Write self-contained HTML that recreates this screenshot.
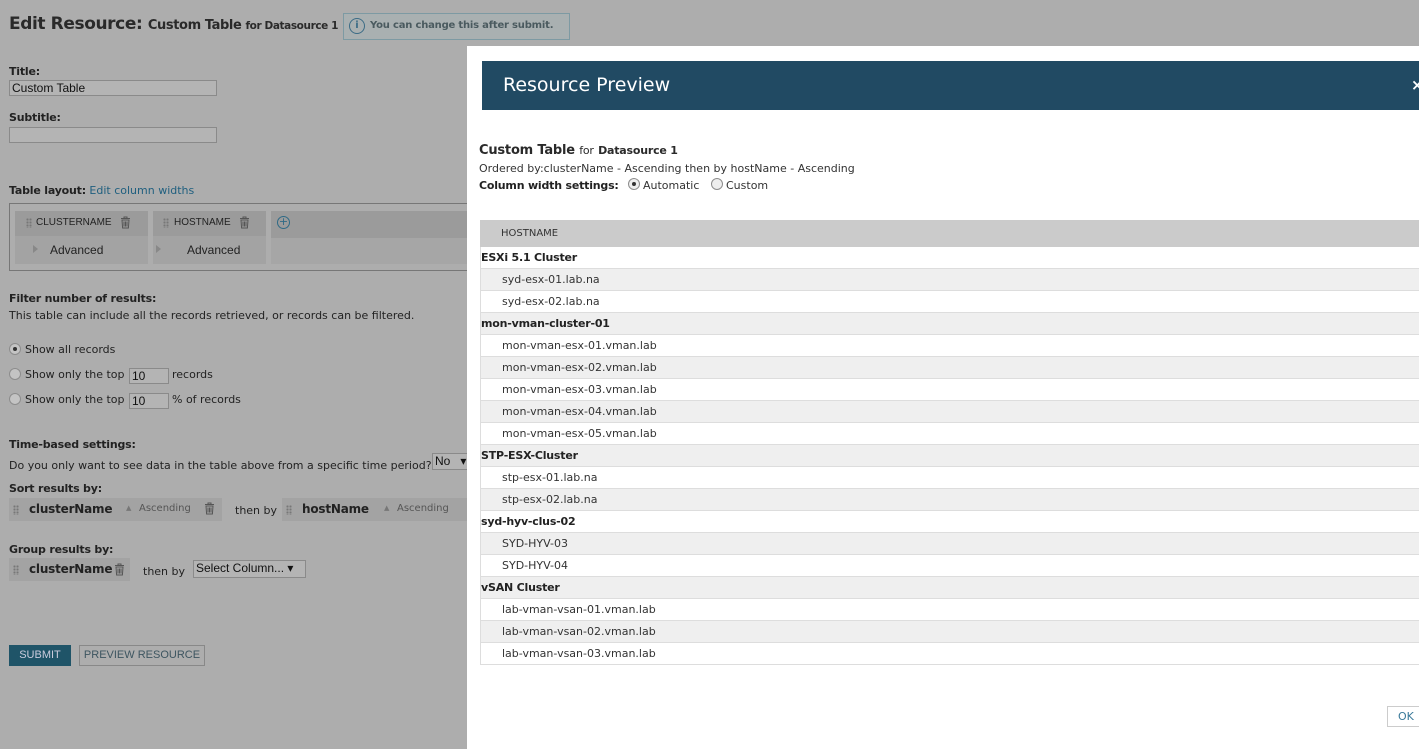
<!DOCTYPE html>
<html><head><meta charset="utf-8"><style>
*{margin:0;padding:0;box-sizing:border-box}
body{width:1419px;height:749px;overflow:hidden;background:#adadad;font-family:"DejaVu Sans","Liberation Sans",sans-serif;color:#222;position:relative;font-size:11px}
.a{position:absolute;white-space:nowrap}
.b{font-weight:bold;letter-spacing:-0.2px}
.inp{position:absolute;border:1px solid #8a8a8a;background:#b4b4b4;height:16px;font-family:"Liberation Sans",sans-serif;font-size:12px;padding-left:2px;line-height:14px;color:#111}
.rad{position:absolute;width:12px;height:12px;border-radius:50%;border:1px solid #8d8d8d;background:#c4c4c4}
.rad.on::after{content:"";position:absolute;left:3px;top:3px;width:4px;height:4px;border-radius:50%;background:#333}
.chip{position:absolute;background:#a3a3a3}
.dots{position:absolute;width:6px;height:10px;background:radial-gradient(circle,#777 1px,transparent 1.2px) 0 0/3px 3px}
.tr{position:absolute;width:11px;height:13px}
#modal{position:absolute;left:467px;top:46px;width:952px;height:703px;background:#fff}
.row{position:absolute;left:480px;width:939px;height:22px;border-bottom:1px solid #ddd;border-left:1px solid #ddd;font-size:11px;line-height:22px;color:#333}
.row.g{background:#efefef}
.row.h{padding-left:21px}
.row.grp{font-weight:bold;color:#222;padding-left:0;letter-spacing:-0.2px}
</style></head><body>
<svg width="0" height="0" style="position:absolute"><defs><symbol id="t" viewBox="0 0 11 13"><path d="M1 2.5h9M4 2.5V1h3v1.5M2 4h7l-.6 8H2.6z M4 5.5v5M5.5 5.5v5M7 5.5v5" fill="none" stroke="currentColor" stroke-width="1"/></symbol></defs></svg>
<div class="a" style="left:9px;top:14px;font-size:17px;font-weight:bold;color:#2a2a2a;letter-spacing:-0.4px">Edit Resource: <span style="font-size:13px">Custom Table <span style="font-size:10.5px">for Datasource 1</span></span></div>
<div class="a" style="left:343px;top:13px;width:227px;height:27px;border:1px solid #7d9aa3;background:#a9b0b1;"></div>
<div class="a" style="left:349px;top:18px;width:16px;height:16px;border:1px solid #3c6c86;border-radius:50%;font-size:10px;line-height:14px;text-align:center;color:#3c6c86;font-weight:bold">i</div>
<div class="a b" style="left:370px;top:20px;font-size:10px;color:#4a5a5f">You can change this after submit.</div>

<div class="a b" style="left:9px;top:65px">Title:</div>
<div class="inp" style="left:9px;top:80px;width:208px">Custom Table</div>
<div class="a b" style="left:9px;top:111px">Subtitle:</div>
<div class="inp" style="left:9px;top:127px;width:208px"></div>

<div class="a" style="left:9px;top:184px"><b style="letter-spacing:-0.2px">Table layout:</b> <span style="color:#1f5f7f">Edit column widths</span></div>
<div class="a" style="left:9px;top:203px;width:470px;height:68px;border:1px solid #777"></div>
<div class="chip" style="left:15px;top:211px;width:133px;height:53px"></div>
<div class="a" style="left:15px;top:211px;width:133px;height:25px;background:#9b9b9b"></div>
<div class="dots" style="left:26px;top:218px"></div>
<div class="a" style="left:36px;top:217px;font-size:10px;font-family:'Liberation Sans',sans-serif;color:#222">CLUSTERNAME</div>
<svg class="tr" style="left:120px;top:216px;color:#555"><use href="#t"/></svg>
<div class="a" style="left:33px;top:245px;width:0;height:0;border-left:5px solid #888;border-top:4px solid transparent;border-bottom:4px solid transparent"></div>
<div class="a" style="left:50px;top:243px;font-size:12px;font-family:'Liberation Sans',sans-serif;color:#222">Advanced</div>
<div class="chip" style="left:153px;top:211px;width:113px;height:53px"></div>
<div class="a" style="left:153px;top:211px;width:113px;height:25px;background:#9b9b9b"></div>
<div class="dots" style="left:163px;top:218px"></div>
<div class="a" style="left:174px;top:217px;font-size:10px;font-family:'Liberation Sans',sans-serif">HOSTNAME</div>
<svg class="tr" style="left:239px;top:216px;color:#555"><use href="#t"/></svg>
<div class="a" style="left:156px;top:245px;width:0;height:0;border-left:5px solid #888;border-top:4px solid transparent;border-bottom:4px solid transparent"></div>
<div class="a" style="left:187px;top:243px;font-size:12px;font-family:'Liberation Sans',sans-serif">Advanced</div>
<div class="a" style="left:271px;top:211px;width:200px;height:53px;background:#a6a6a6"></div>
<div class="a" style="left:271px;top:211px;width:200px;height:27px;background:#9b9b9b"></div>
<div class="a" style="left:277px;top:216px;width:13px;height:13px;border:1px solid #2f6a86;border-radius:50%;font-size:11px;line-height:10px;text-align:center;color:#2f6a86">+</div>

<div class="a b" style="left:9px;top:292px">Filter number of results:</div>
<div class="a" style="left:9px;top:309px">This table can include all the records retrieved, or records can be filtered.</div>
<div class="rad on" style="left:9px;top:343px"></div><div class="a" style="left:25px;top:343px">Show all records</div>
<div class="rad" style="left:9px;top:368px"></div><div class="a" style="left:25px;top:368px">Show only the top</div>
<div class="inp" style="left:129px;top:368px;width:40px">10</div><div class="a" style="left:172px;top:368px">records</div>
<div class="rad" style="left:9px;top:393px"></div><div class="a" style="left:25px;top:393px">Show only the top</div>
<div class="inp" style="left:129px;top:393px;width:40px">10</div><div class="a" style="left:172px;top:393px">% of records</div>

<div class="a b" style="left:9px;top:438px">Time-based settings:</div>
<div class="a" style="left:9px;top:459px">Do you only want to see data in the table above from a specific time period?</div>
<div class="inp" style="left:432px;top:453px;width:40px;height:17px">No &nbsp;&nbsp;▾</div>
<div class="a b" style="left:9px;top:482px">Sort results by:</div>
<div class="chip" style="left:9px;top:498px;width:213px;height:23px"></div>
<div class="dots" style="left:13px;top:505px"></div>
<div class="a b" style="left:29px;top:502px;font-size:12px">clusterName</div>
<div class="a" style="left:126px;top:504px;font-size:7px;color:#777">▲</div>
<div class="a" style="left:139px;top:503px;font-size:10px;color:#555">Ascending</div>
<svg class="tr" style="left:204px;top:502px;color:#555"><use href="#t"/></svg>
<div class="a" style="left:235px;top:504px">then by</div>
<div class="chip" style="left:282px;top:498px;width:185px;height:23px"></div>
<div class="dots" style="left:286px;top:505px"></div>
<div class="a b" style="left:302px;top:502px;font-size:12px">hostName</div>
<div class="a" style="left:384px;top:504px;font-size:7px;color:#777">▲</div>
<div class="a" style="left:397px;top:503px;font-size:10px;color:#555">Ascending</div>

<div class="a b" style="left:9px;top:543px">Group results by:</div>
<div class="chip" style="left:9px;top:558px;width:121px;height:23px"></div>
<div class="dots" style="left:13px;top:565px"></div>
<div class="a b" style="left:29px;top:562px;font-size:12px">clusterName</div>
<svg class="tr" style="left:114px;top:563px;color:#555"><use href="#t"/></svg>
<div class="a" style="left:143px;top:565px">then by</div>
<div class="inp" style="left:193px;top:560px;width:113px;height:18px;line-height:15px">Select Column... ▾</div>

<div class="a" style="left:9px;top:645px;width:62px;height:21px;background:#1f5468;color:#ccd;font-size:11px;line-height:21px;text-align:center;font-family:'Liberation Sans',sans-serif">SUBMIT</div>
<div class="a" style="left:79px;top:645px;width:126px;height:21px;border:1px solid #888;color:#3d5560;font-size:11px;line-height:19px;text-align:center;font-family:'Liberation Sans',sans-serif">PREVIEW RESOURCE</div>

<div id="modal"></div>
<div class="a" style="left:482px;top:61px;width:937px;height:49px;background:#214a63"></div>
<div class="a" style="left:503px;top:74px;font-size:19px;color:#fff">Resource Preview</div>
<div class="a" style="left:1411px;top:76px;font-size:15px;color:#fff;font-weight:bold">×</div>
<div class="a" style="left:479px;top:143px;font-size:13px;font-weight:bold;color:#2a2a2a;letter-spacing:-0.2px">Custom Table <span style="font-size:11px;font-weight:normal">for</span> <span style="font-size:11px">Datasource 1</span></div>
<div class="a" style="left:479px;top:162px;color:#333">Ordered by:clusterName - Ascending then by hostName - Ascending</div>
<div class="a b" style="left:479px;top:179px">Column width settings:</div>
<div class="rad on" style="left:628px;top:178px;background:#eee"></div><div class="a" style="left:643px;top:179px;color:#333">Automatic</div>
<div class="rad" style="left:711px;top:178px;background:#eee"></div><div class="a" style="left:726px;top:179px;color:#333">Custom</div>
<div class="a" style="left:480px;top:220px;width:939px;height:27px;background:#cbcbcb"></div>
<div class="a" style="left:501px;top:228px;font-size:10px;color:#333">HOSTNAME</div>

<div class="row grp" style="top:247px">ESXi 5.1 Cluster</div>
<div class="row h g" style="top:269px">syd-esx-01.lab.na</div>
<div class="row h" style="top:291px">syd-esx-02.lab.na</div>
<div class="row grp g" style="top:313px">mon-vman-cluster-01</div>
<div class="row h" style="top:335px">mon-vman-esx-01.vman.lab</div>
<div class="row h g" style="top:357px">mon-vman-esx-02.vman.lab</div>
<div class="row h" style="top:379px">mon-vman-esx-03.vman.lab</div>
<div class="row h g" style="top:401px">mon-vman-esx-04.vman.lab</div>
<div class="row h" style="top:423px">mon-vman-esx-05.vman.lab</div>
<div class="row grp g" style="top:445px">STP-ESX-Cluster</div>
<div class="row h" style="top:467px">stp-esx-01.lab.na</div>
<div class="row h g" style="top:489px">stp-esx-02.lab.na</div>
<div class="row grp" style="top:511px">syd-hyv-clus-02</div>
<div class="row h g" style="top:533px">SYD-HYV-03</div>
<div class="row h" style="top:555px">SYD-HYV-04</div>
<div class="row grp g" style="top:577px">vSAN Cluster</div>
<div class="row h" style="top:599px">lab-vman-vsan-01.vman.lab</div>
<div class="row h g" style="top:621px">lab-vman-vsan-02.vman.lab</div>
<div class="row h" style="top:643px">lab-vman-vsan-03.vman.lab</div>

<div class="a" style="left:1387px;top:706px;width:40px;height:21px;border:1px solid #ccc;color:#3a7a9a;font-size:11px;line-height:19px;padding-left:10px">OK</div>
</body></html>
